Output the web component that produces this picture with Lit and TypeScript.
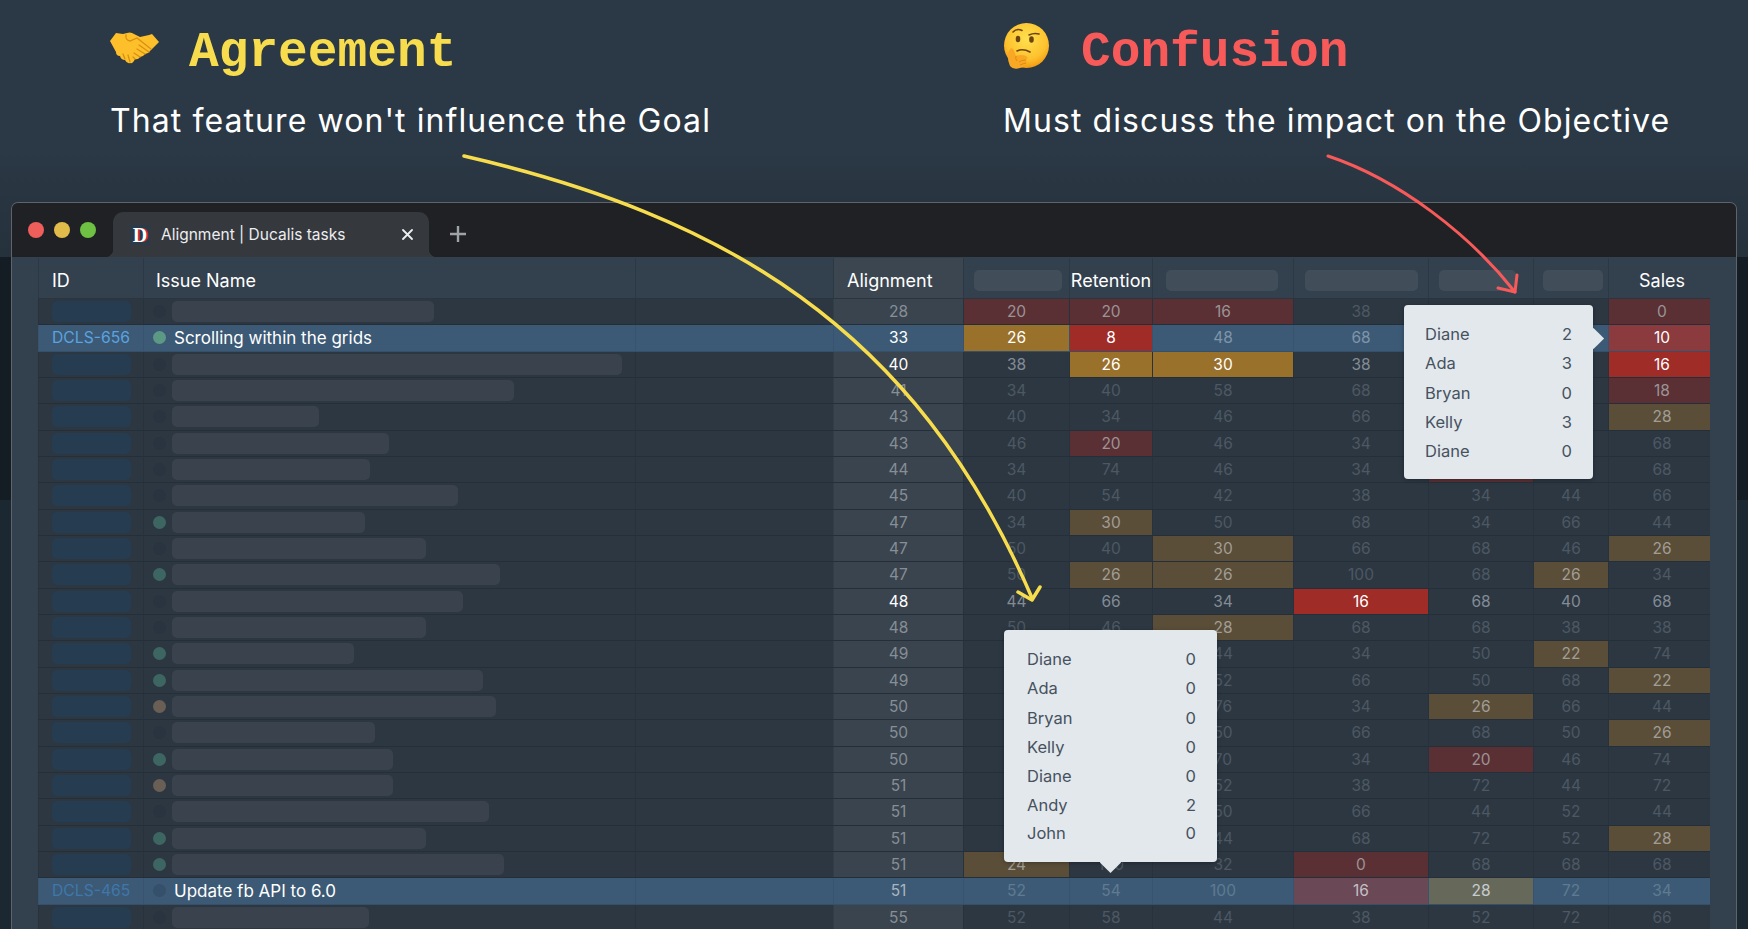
import { LitElement, html, css, svg } from "lit";
import { customElement } from "lit/decorators.js";

// tone suffix: r/R dim+strong red, o/O dim+strong orange, x/p/g one-offs, m medium text, w white text
const ROWS = [
  { w: 433, dot: "", v: "28 20r 20r 16r 38 - - 0r" },
  { id: "DCLS-656", name: "Scrolling within the grids", dot: "lit", v: "33w 26O 8R 48m 68m - - 10x" },
  { w: 621, dot: "", v: "40w 38m 26O 30O 38m - - 16R" },
  { w: 513, dot: "", v: "41 34 40 58 68 - - 18r" },
  { w: 318, dot: "", v: "43 40 34 46 66 - - 28o" },
  { w: 388, dot: "", v: "43 46 20r 46 34 - - 68" },
  { w: 369, dot: "", v: "44 34 74 46 34 -r - 68" },
  { w: 457, dot: "", v: "45 40 54 42 38 34 44 66" },
  { w: 364, dot: "green", v: "47 34 30o 50 68 34 66 44" },
  { w: 425, dot: "", v: "47 50 40 30o 66 68 46 26o" },
  { w: 499, dot: "green", v: "47 50 26o 26o 100 68 26o 34" },
  { w: 462, dot: "", v: "48w 44m 66m 34m 16R 68m 40m 68m" },
  { w: 425, dot: "", v: "48 50 46 28o 68 68 38 38" },
  { w: 353, dot: "green", v: "49 - - 44 34 50 22o 74" },
  { w: 482, dot: "green", v: "49 - - 52 66 50 68 22o" },
  { w: 495, dot: "brown", v: "50 - - 76 34 26o 66 44" },
  { w: 374, dot: "", v: "50 - - 50 66 68 50 26o" },
  { w: 392, dot: "green", v: "50 - - 70 34 20r 46 74" },
  { w: 392, dot: "brown", v: "51 - - 52 38 72 44 72" },
  { w: 488, dot: "", v: "51 - - 50 66 44 52 44" },
  { w: 425, dot: "green", v: "51 - - 44 68 72 52 28o" },
  { w: 503, dot: "green", v: "51 24o 100 32 0r 68 68 68" },
  { id: "DCLS-465", name: "Update fb API to 6.0", dot: "", v: "51 52 54 100 16p 28g 72 34" },
  { w: 368, dot: "", v: "55 52 58 44 38 52 72 66" },
];

// pill = blurred-out column title
const HEAD = [
  { pill: 88, shift: 2 },
  { label: "Retention" },
  { pill: 112, shift: -2 },
  { pill: 113, shift: 0 },
  { pill: 77, shift: -8 },
  { pill: 60, shift: 3 },
  { label: "Sales" },
];

const POP_A = [["Diane", 2], ["Ada", 3], ["Bryan", 0], ["Kelly", 3], ["Diane", 0]];
const POP_B = [["Diane", 0], ["Ada", 0], ["Bryan", 0], ["Kelly", 0], ["Diane", 0], ["Andy", 2], ["John", 0]];

@customElement("app-root")
export class AppRoot extends LitElement {
  static styles = css`
    :host {
      display: block;
      position: relative;
      height: 929px;
      overflow: hidden;
      font-family: Inter, sans-serif;
      background: linear-gradient(#2b3845 0, #2b3845 150px, #25323c 257px, #141d24 257px, #141d24 500px, #1c2831 500px);
    }
    .hero {
      height: 202px;
      box-sizing: border-box;
      padding: 23px 0 0 110px;
      display: grid;
      grid-template-columns: 893px 1fr;
    }
    .title {
      display: flex;
      align-items: center;
      height: 60px;
      font: 700 49.5px "Liberation Mono", monospace;
    }
    .agree { color: #f7dd4d; }
    .confuse { color: #f85a5a; }
    .title svg { flex: none; display: block; }
    .agree svg { margin: -9px 30px 0 0; }
    .confuse svg { margin: -13px 31px 0 0; }
    .sub {
      margin-top: 18px;
      font: 400 32px/40px Inter, sans-serif;
      letter-spacing: 1.08px;
      color: #fff;
    }

    .window {
      margin-left: 11px;
      width: 1726px;
      height: 727px;
      box-sizing: border-box;
      border: 1px solid #5e6469;
      border-bottom: 0;
      border-radius: 7px 7px 0 0;
      background: #33404d;
      overflow: hidden;
    }
    .bar {
      height: 54px;
      display: flex;
      align-items: center;
      background: #1f2125;
      padding-left: 16px;
    }
    .lights { display: flex; gap: 10px; }
    .lights i { width: 16px; height: 16px; border-radius: 50%; }
    .tab {
      position: relative;
      align-self: flex-end;
      height: 45px;
      width: 316px;
      margin-left: 17px;
      box-sizing: border-box;
      padding: 0 16px 0 17px;
      display: flex;
      align-items: center;
      background: #35383d;
      border-radius: 10px 10px 0 0;
      color: #eceef0;
      font: 400 15.5px Inter, sans-serif;
    }
    .tab::before, .tab::after {
      content: "";
      position: absolute;
      bottom: 0;
      width: 8px;
      height: 8px;
    }
    .tab::before { left: -8px; background: radial-gradient(circle at 0 0, transparent 8px, #35383d 8.5px); }
    .tab::after { right: -8px; background: radial-gradient(circle at 100% 0, transparent 8px, #35383d 8.5px); }
    .fav {
      width: 20px;
      height: 20px;
      margin-right: 11px;
      background: #2a3a48;
      color: #fff;
      font: 700 20px/20px "Liberation Serif", serif;
      text-align: center;
      text-shadow: 1.5px 0 0 #d3232b;
    }
    .tab span.name { flex: 1; }
    .plus { margin: 8px 0 0 21px; }

    .table { margin-left: 26px; width: 1672px; }
    .row {
      display: grid;
      grid-template-columns: 105px 492px 198px 130px 106px 83px 141px 135px 105px 75px 102px;
      height: 26.33px;
      box-sizing: border-box;
      border-bottom: 1px solid #252f39;
      background: #2c3742;
      font-size: 17px;
      color: #4d5863;
    }
    .row.hl { background: #3c5a75; border-bottom-color: #35506a; }
    .row.head {
      height: 41px;
      margin-top: 1px;
      background: #33404d;
      border-bottom: 1px solid #2a3540;
      color: #fff;
      font-size: 18px;
    }
    .c {
      display: flex;
      align-items: center;
      justify-content: center;
      box-sizing: border-box;
      border-left: 1px solid #27323c;
      min-width: 0;
    }
    .c.v { font-size: 15.5px; }
    .c:last-child { padding-left: 5px; }
    .row.head .c { border-left-color: #2c3843; padding-top: 5px; }
    .c.left { justify-content: flex-start; }
    .c.idc { padding-left: 13px; }
    .c.namec { padding-left: 9px; }
    .c.issue { padding-left: 12px; }
    .c.align { background: #3a444e; color: #868e96; border-left-color: #333d47; font-size: 15.5px; }
    .row.head .c.align { background: #3b4650; color: #fff; justify-content: flex-start; padding-left: 13px; font-size: 18px; }
    .row.hl .c { border-left-color: #375370; }
    .row.hl .c.align { background: transparent; color: #aab5bf; }
    .row.hl .c.v { color: #5f7a92; }
    .hpill { height: 21px; border-radius: 5px; background: #414e5a; }
    .idpill { width: 79px; height: 21px; border-radius: 5px; background: #263c50; }
    .idtext { color: #5aa3e0; font-size: 15.7px; }
    .idtext.dim { color: #3f77ab; }
    .dot { flex: none; width: 13px; height: 13px; border-radius: 50%; background: #2a3440; margin-right: 6px; }
    .dot.lit { background: #5b9985; }
    .dot.green { background: #3d6663; }
    .dot.brown { background: #6a5f55; }
    .hl .dot { background: #34506a; }
    .hl .dot.lit { background: #5b9985; }
    .npill { height: 21px; border-radius: 5px; background: #39424d; }
    .ntext { margin-left: 2px; color: #fff; }

    .c.m { color: #838c95; }
    .row.hl .c.m { color: #7f95a9; }
    .c.align.w, .row.hl .c.align.w, .c.w { color: #fff; }
    .c.r, .row.hl .c.r { background: #5a3035; color: #9a9496; }
    .c.o, .row.hl .c.o { background: #5b4e38; color: #a09d97; }
    .c.R, .row.hl .c.R { background: #a02c27; color: #fff; }
    .c.O, .row.hl .c.O { background: #9a712b; color: #fff; }
    .row.hl .c.x { background: #8b3a3d; color: #fff; }
    .row.hl .c.p { background: #6a4856; color: #c3c0c6; }
    .row.hl .c.g { background: #66695a; color: #c6ccd0; }

    .pop {
      position: absolute;
      box-sizing: border-box;
      background: #e3e8ec;
      border-radius: 4px;
      box-shadow: 0 1px 4px rgba(0, 0, 0, 0.3);
      color: #46525f;
      font-size: 16.5px;
      line-height: 29.25px;
    }
    .pop::after {
      content: "";
      position: absolute;
      width: 15px;
      height: 15px;
      background: #e3e8ec;
      transform: rotate(45deg);
    }
    .pop div { display: flex; justify-content: space-between; }
    .pop-a { left: 1404px; top: 305px; width: 189px; height: 174px; padding: 15px 21px 0; }
    .pop-a::after { right: -7.5px; top: 25.5px; }
    .pop-b { left: 1004px; top: 630px; width: 213px; height: 232px; padding: 15px 21px 0 23px; }
    .pop-b::after { bottom: -7.5px; left: 98.5px; }
    .pop-b div:last-child { margin-top: -2px; }

    .arrows { position: absolute; left: 0; top: 0; pointer-events: none; }
  `;

  handshake() {
    return html`<svg width="49" height="33" viewBox="0 0 49 33">
      <path fill="#fdc02b" d="M0 9 L6 1 L13 2 L17 1 Q20 0 22 1 L30 5 L39 3 L42 2 L49 10 L42 17 L40 19 Q38 22 35 22 Q33 25 30 25 Q28 28 25 27 Q23 32 20 31 Q17 32 15 28 Q11 28 10 24 Q6 24 6 20 Z"/>
      <g fill="none" stroke="#d98f10" stroke-width="1.3" stroke-linecap="round">
        <path d="M16 3 Q15 8 20 9 L27 6 L41 17"/>
        <path d="M29 13 L39 20"/>
        <path d="M27 17 L35 22"/>
        <path d="M24 21 L30 25"/>
        <path d="M13 22 L15 27 M18 23 L20 30 M23 25 L25 27"/>
      </g>
    </svg>`;
  }

  thinking() {
    return html`<svg width="47" height="47" viewBox="0 0 47 47">
      <defs>
        <radialGradient id="face" cx="0.5" cy="0.35" r="0.65">
          <stop offset="0" stop-color="#ffe04f"/>
          <stop offset="0.7" stop-color="#fdc22e"/>
          <stop offset="1" stop-color="#f29a12"/>
        </radialGradient>
      </defs>
      <circle cx="23.5" cy="22.5" r="22.5" fill="url(#face)"/>
      <path d="M10 9 Q14 5 19 7.5" fill="none" stroke="#6b4310" stroke-width="1.6" stroke-linecap="round"/>
      <path d="M26 12 Q31 9.5 36 11" fill="none" stroke="#6b4310" stroke-width="1.6" stroke-linecap="round"/>
      <ellipse cx="15" cy="16" rx="2.3" ry="3.2" fill="#6b4310"/>
      <ellipse cx="28.5" cy="16.5" rx="2.3" ry="3.2" fill="#6b4310"/>
      <path d="M14 28 Q20 25 27 29" fill="none" stroke="#6b4310" stroke-width="1.6" stroke-linecap="round"/>
      <path fill="#f9a825" d="M7 26 Q10 24 11 28 L13 33 Q18 31 23 33 Q26 35 23 37 L24 40 Q22 44 17 45 Q10 47 7 43 Q4 36 5 30 Z"/>
      <path d="M13 33 Q12 36 14 38 M23 37 Q18 37 16 39 M23 40 Q19 41 17 42" fill="none" stroke="#e08a0c" stroke-width="1"/>
    </svg>`;
  }

  renderCell(raw: string) {
    const m = raw.match(/^(\d*|-)([a-zA-Z]?)$/);
    const text = m![1] === "-" ? "" : m![1];
    return html`<div class="c v ${m![2]}">${text}</div>`;
  }

  renderRow(r: any) {
    const [align, ...rest] = r.v.split(" ");
    const tone = align.slice(2);
    return html`<div class="row ${r.id ? "hl" : ""}">
      <div class="c left idc">
        ${r.id
          ? html`<span class="idtext ${r.id === "DCLS-465" ? "dim" : ""}">${r.id}</span>`
          : html`<div class="idpill"></div>`}
      </div>
      <div class="c left namec">
        <div class="dot ${r.dot}"></div>
        ${r.name
          ? html`<span class="ntext">${r.name}</span>`
          : html`<div class="npill" style="width:${r.w - 171}px"></div>`}
      </div>
      <div class="c"></div>
      <div class="c align ${tone}">${align.slice(0, 2)}</div>
      ${rest.map((v: string) => this.renderCell(v))}
    </div>`;
  }

  render() {
    return html`
      <div class="hero">
        <div>
          <div class="title agree">${this.handshake()}Agreement</div>
          <div class="sub">That feature won't influence the Goal</div>
        </div>
        <div>
          <div class="title confuse">${this.thinking()}Confusion</div>
          <div class="sub">Must discuss the impact on the Objective</div>
        </div>
      </div>

      <div class="window">
        <div class="bar">
          <div class="lights">
            <i style="background:#ee5f5b"></i>
            <i style="background:#e2bc4a"></i>
            <i style="background:#6fc143"></i>
          </div>
          <div class="tab">
            <div class="fav">D</div>
            <span class="name">Alignment | Ducalis tasks</span>
            <svg width="11" height="11" viewBox="0 0 11 11">
              <path d="M1 1 L10 10 M10 1 L1 10" stroke="#eceef0" stroke-width="1.8" stroke-linecap="round"/>
            </svg>
          </div>
          <svg class="plus" width="16" height="16" viewBox="0 0 16 16">
            <path d="M8 0 V16 M0 8 H16" stroke="#9fa2a6" stroke-width="2.4"/>
          </svg>
        </div>
        <div class="table">
          <div class="row head">
            <div class="c left idc">ID</div>
            <div class="c left issue">Issue Name</div>
            <div class="c"></div>
            <div class="c align">Alignment</div>
            ${HEAD.map((h) =>
              h.label
                ? html`<div class="c">${h.label}</div>`
                : html`<div class="c"><div class="hpill" style="width:${h.pill}px;margin-left:${h.shift}px"></div></div>`
            )}
          </div>
          ${ROWS.map((r) => this.renderRow(r))}
        </div>
      </div>

      <div class="pop pop-a">
        ${POP_A.map((p) => html`<div><span>${p[0]}</span><span>${p[1]}</span></div>`)}
      </div>
      <div class="pop pop-b">
        ${POP_B.map((p) => html`<div><span>${p[0]}</span><span>${p[1]}</span></div>`)}
      </div>

      <svg class="arrows" width="1748" height="929" viewBox="0 0 1748 929" fill="none" stroke-linecap="round" stroke-linejoin="round">
        ${svg`<path d="M464 156 C720 215 915 325 1032 598" stroke="#f7dd4d" stroke-width="3.5"/>
          <path d="M1018 592 L1032 600 L1040 587" stroke="#f7dd4d" stroke-width="3.5"/>
          <path d="M1328 156 C1400 180 1470 235 1515 292" stroke="#f85a5a" stroke-width="3"/>
          <path d="M1498 288 L1515 292 L1517 275" stroke="#f85a5a" stroke-width="3"/>`}
      </svg>
    `;
  }
}
